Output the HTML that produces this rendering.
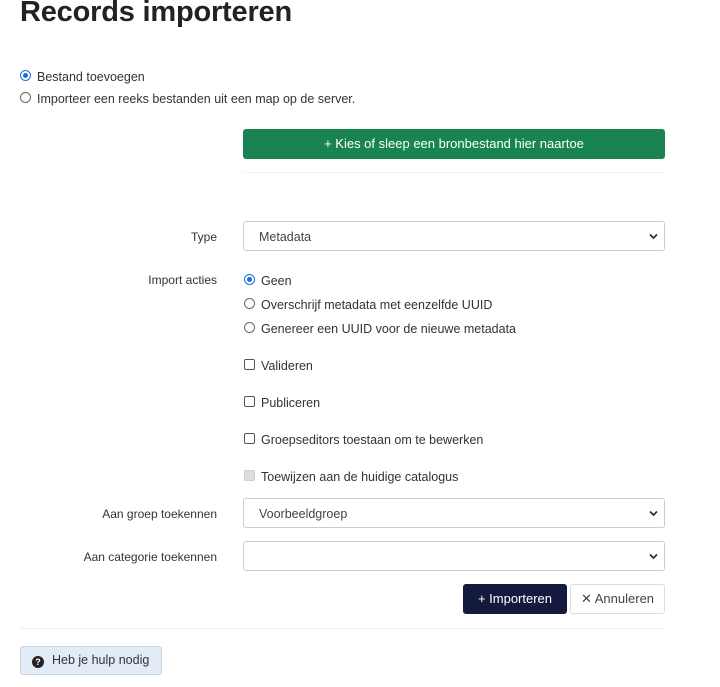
<!DOCTYPE html>
<html><head><meta charset="utf-8"><style>
*{box-sizing:border-box;margin:0;padding:0}
body{width:720px;height:687px;background:#fff;font-family:"Liberation Sans",sans-serif;color:#333;position:relative;overflow:hidden;font-size:12.5px}
.a{position:absolute;white-space:nowrap}
.t{margin-top:3px}
h1{position:absolute;left:20px;top:-4px;font-size:29px;font-weight:bold;color:#222;letter-spacing:-0.2px}
.radio{position:absolute;width:11px;height:11px;border:1px solid #666;border-radius:50%;background:#fff}
.radio.on{border:1px solid #1a6fd6;background:#fff}
.radio.on::after{content:"";position:absolute;left:2px;top:2px;width:5px;height:5px;border-radius:50%;background:#1a6fd6}
.cb{position:absolute;width:11px;height:11px;border:1px solid #555;border-radius:2px;background:#fff}
.cb.dis{border-color:#ccc;background:#ddd}
.sel{position:absolute;left:243px;width:422px;height:30px;border:1px solid #ccc;border-radius:3px;padding:8px 0 0 15px;color:#444}
.sel svg{position:absolute;right:6px;top:11px}
.lbl{position:absolute;right:503px;text-align:right;color:#333;font-size:12px;margin-top:2px}
</style></head><body>
<h1>Records importeren</h1>
<div class="radio on" style="left:20px;top:70px"></div><div class="a t" style="left:37px;top:67px">Bestand toevoegen</div>
<div class="radio" style="left:20px;top:92px"></div><div class="a t" style="left:37px;top:89px">Importeer een reeks bestanden uit een map op de server.</div>
<div class="a" style="left:243px;top:129px;width:422px;height:30px;background:#198452;border-radius:3px;color:#fff;text-align:center;line-height:29px;font-size:13px">+ Kies of sleep een bronbestand hier naartoe</div>
<div class="a" style="left:243px;top:172px;width:422px;height:1px;background:#f3f3f3"></div>
<div class="lbl" style="top:228px">Type</div>
<div class="sel" style="top:221px">Metadata<svg width="9" height="7" viewBox="0 0 9 7"><path d="M1 1.5l3.5 3.5 3.5-3.5" stroke="#333" stroke-width="1.8" fill="none"/></svg></div>
<div class="lbl" style="top:271px">Import acties</div>
<div class="radio on" style="left:244px;top:274px"></div><div class="a t" style="left:261px;top:271px">Geen</div>
<div class="radio" style="left:244px;top:298px"></div><div class="a t" style="left:261px;top:295px">Overschrijf metadata met eenzelfde UUID</div>
<div class="radio" style="left:244px;top:322px"></div><div class="a t" style="left:261px;top:319px">Genereer een UUID voor de nieuwe metadata</div>
<div class="cb" style="left:244px;top:359px"></div><div class="a t" style="left:261px;top:356px">Valideren</div>
<div class="cb" style="left:244px;top:396px"></div><div class="a t" style="left:261px;top:393px">Publiceren</div>
<div class="cb" style="left:244px;top:433px"></div><div class="a t" style="left:261px;top:430px">Groepseditors toestaan om te bewerken</div>
<div class="cb dis" style="left:244px;top:470px"></div><div class="a t" style="left:261px;top:467px">Toewijzen aan de huidige catalogus</div>
<div class="lbl" style="top:505px">Aan groep toekennen</div>
<div class="sel" style="top:498px">Voorbeeldgroep<svg width="9" height="7" viewBox="0 0 9 7"><path d="M1 1.5l3.5 3.5 3.5-3.5" stroke="#333" stroke-width="1.8" fill="none"/></svg></div>
<div class="lbl" style="top:548px">Aan categorie toekennen</div>
<div class="sel" style="top:541px"><svg width="9" height="7" viewBox="0 0 9 7"><path d="M1 1.5l3.5 3.5 3.5-3.5" stroke="#333" stroke-width="1.8" fill="none"/></svg></div>
<div class="a" style="left:463px;top:584px;width:104px;height:30px;background:#131a3d;border-radius:3px;color:#fff;text-align:center;line-height:30px;font-size:13px">+ Importeren</div>
<div class="a" style="left:570px;top:584px;width:95px;height:30px;border:1px solid #ddd;border-radius:3px;color:#444;text-align:center;line-height:28px;font-size:13px">✕ Annuleren</div>
<div class="a" style="left:20px;top:628px;width:645px;height:1px;background:#f0f0f0"></div>
<div class="a" style="left:20px;top:646px;width:142px;height:29px;background:#e2ecf6;border:1px solid #c9d6e3;border-radius:3px;line-height:27px;padding-left:11px;color:#333;font-size:12.5px"><span style="display:inline-block;width:12px;height:12px;border-radius:50%;background:#222;color:#fff;font-size:9px;line-height:12px;text-align:center;font-weight:bold;vertical-align:-1px;margin-right:8px">?</span>Heb je hulp nodig</div>
</body></html>
